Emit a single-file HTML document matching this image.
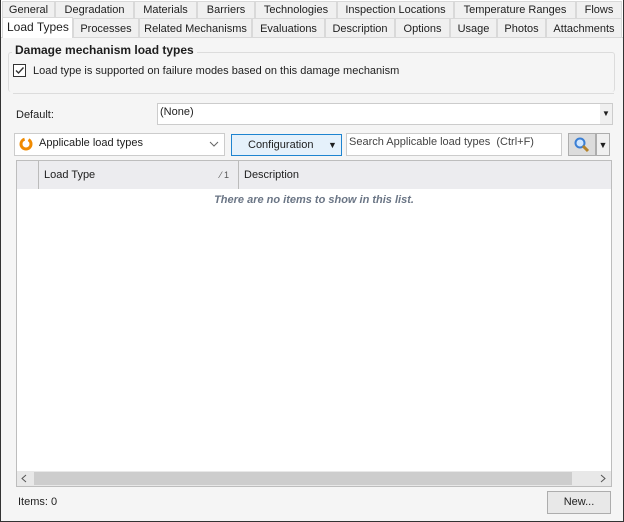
<!DOCTYPE html><html><head><style>
*{box-sizing:border-box;margin:0;padding:0}
body{width:624px;height:522px;position:relative;background:#f5f5f5;font-family:"Liberation Sans",sans-serif;font-size:11px;color:#1e1e1e;overflow:hidden}
.a{position:absolute;white-space:nowrap}
.tab{position:absolute;height:18px;border:1px solid #d9d9d9;border-bottom:none;background:#f0f0f0;text-align:center;line-height:17px;white-space:nowrap}
</style></head><body>
<div class="a" style="left:0;top:0;width:624px;height:522px;border:1px solid #333;background:#f5f5f5"></div>
<div class="a" style="left:1px;top:0;width:622px;height:37px;background:#fff"></div>
<div class="tab" style="left:2px;top:1px;width:53px">General</div>
<div class="tab" style="left:55px;top:1px;width:79px">Degradation</div>
<div class="tab" style="left:134px;top:1px;width:63px">Materials</div>
<div class="tab" style="left:197px;top:1px;width:58px">Barriers</div>
<div class="tab" style="left:255px;top:1px;width:82px">Technologies</div>
<div class="tab" style="left:337px;top:1px;width:117px">Inspection Locations</div>
<div class="tab" style="left:454px;top:1px;width:122px">Temperature Ranges</div>
<div class="tab" style="left:576px;top:1px;width:46px">Flows</div>
<div class="tab" style="left:73px;top:18px;width:66px;height:19px;line-height:20px">Processes</div>
<div class="tab" style="left:139px;top:18px;width:113px;height:19px;line-height:20px">Related Mechanisms</div>
<div class="tab" style="left:252px;top:18px;width:73px;height:19px;line-height:20px">Evaluations</div>
<div class="tab" style="left:325px;top:18px;width:70px;height:19px;line-height:20px">Description</div>
<div class="tab" style="left:395px;top:18px;width:55px;height:19px;line-height:20px">Options</div>
<div class="tab" style="left:450px;top:18px;width:47px;height:19px;line-height:20px">Usage</div>
<div class="tab" style="left:497px;top:18px;width:49px;height:19px;line-height:20px">Photos</div>
<div class="tab" style="left:546px;top:18px;width:76px;height:19px;line-height:20px">Attachments</div>
<div class="a" style="left:1px;top:37px;width:622px;height:1px;background:#d9d9d9"></div>
<div class="a" style="left:2px;top:17px;width:71px;height:21px;background:#fff;border:1px solid #d9d9d9;border-bottom:none;line-height:19px;padding-left:4px;font-size:12px">Load Types</div>
<div class="a" style="left:8px;top:52px;width:607px;height:40px;border:1px solid #dcdcdc;border-bottom:none;border-radius:3px"></div>
<div class="a" style="left:12px;top:43px;background:#f5f5f5;padding:0 3px;font-weight:bold;font-size:12px">Damage mechanism load types</div>
<div class="a" style="left:13px;top:64px;width:13px;height:13px;border:1px solid #333;background:#fff"><svg width="11" height="11" style="position:absolute;left:0;top:0"><path d="M2 5.5L4.5 8L9.5 2.5" stroke="#333" stroke-width="1.4" fill="none"/></svg></div>
<div class="a" style="left:33px;top:65px">Load type is supported on failure modes based on this damage mechanism</div>
<div class="a" style="left:13px;top:93px;width:601px;height:1px;background:#dcdcdc"></div>
<div class="a" style="left:16px;top:109px">Default:</div>
<div class="a" style="left:157px;top:103px;width:456px;height:22px;border:1px solid #ccc;background:#fff;padding:2px 2px">(None)</div>
<div class="a" style="left:600px;top:104px;width:12px;height:20px;background:#f0f0f0;font-size:8px;text-align:center;line-height:20px">▼</div>
<div class="a" style="left:14px;top:133px;width:211px;height:23px;border:1px solid #ccc;background:#fff"></div>
<svg class="a" style="left:18px;top:137px" width="16" height="14"><circle cx="8" cy="7" r="5" stroke="#f08a00" stroke-width="3" fill="none" stroke-dasharray="22 4"/></svg>
<div class="a" style="left:39px;top:137px">Applicable load types</div>
<svg class="a" style="left:209px;top:141px" width="10" height="6"><path d="M1 1L5 5L9 1" stroke="#666" fill="none"/></svg>
<div class="a" style="left:231px;top:134px;width:111px;height:22px;border:1px solid #1e84d0;background:#e5f1fb;line-height:20px;padding-left:16px">Configuration</div>
<div class="a" style="left:328px;top:134px;font-size:9px;line-height:22px">▼</div>
<div class="a" style="left:346px;top:133px;width:216px;height:23px;border:1px solid #ccc;background:#fff;padding:2px 2px;color:#444">Search Applicable load types&nbsp; (Ctrl+F)</div>
<div class="a" style="left:568px;top:133px;width:28px;height:23px;border:1px solid #adadad;background:#dcdcdc"></div>
<svg class="a" style="left:573px;top:136px" width="18" height="18"><circle cx="7" cy="7" r="4.5" stroke="#3b7fd4" stroke-width="2" fill="#cfe6ff"/><path d="M10 10L15 15" stroke="#b5832a" stroke-width="3"/></svg>
<div class="a" style="left:596px;top:133px;width:14px;height:23px;border:1px solid #adadad;background:#f0f0f0;font-size:9px;text-align:center;line-height:22px">▼</div>
<div class="a" style="left:16px;top:160px;width:596px;height:327px;border:1px solid #bdbdbd;background:#fff"></div>
<div class="a" style="left:17px;top:161px;width:594px;height:28px;background:#ececef"></div>
<div class="a" style="left:38px;top:161px;width:1px;height:28px;background:#bbb"></div>
<div class="a" style="left:238px;top:161px;width:1px;height:28px;background:#bbb"></div>
<div class="a" style="left:44px;top:169px">Load Type</div>
<div class="a" style="left:220px;top:170px;font-size:9px;color:#555">⁄ 1</div>
<div class="a" style="left:244px;top:169px">Description</div>
<div class="a" style="left:17px;top:194px;width:594px;text-align:center;font-style:italic;font-weight:bold;color:#6a7585">There are no items to show in this list.</div>
<div class="a" style="left:17px;top:471px;width:594px;height:15px;background:#e8e8e8"></div>
<div class="a" style="left:34px;top:472px;width:538px;height:13px;background:#cdcdcd"></div>
<svg class="a" style="left:21px;top:474px" width="6" height="9"><path d="M5 1L1 4.5L5 8" stroke="#555" fill="none"/></svg>
<svg class="a" style="left:600px;top:474px" width="6" height="9"><path d="M1 1L5 4.5L1 8" stroke="#555" fill="none"/></svg>
<div class="a" style="left:18px;top:496px">Items: 0</div>
<div class="a" style="left:547px;top:491px;width:64px;height:23px;border:1px solid #adadad;background:#e8e8e8;text-align:center;line-height:21px">New...</div>
</body></html>
